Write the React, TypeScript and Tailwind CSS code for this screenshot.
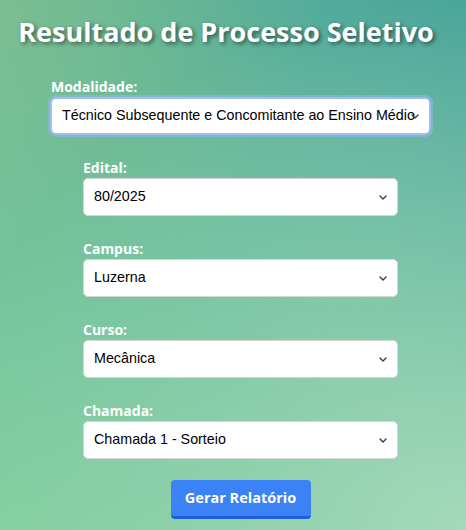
import React from 'react';

const campos = [
  { label: 'Edital:', value: '80/2025' },
  { label: 'Campus:', value: 'Luzerna' },
  { label: 'Curso:', value: 'Mecânica' },
  { label: 'Chamada:', value: 'Chamada 1 - Sorteio' },
];

const Chevron = ({ className }: { className: string }) => (
  <svg
    className={className}
    width="8"
    height="5"
    viewBox="0 0 8 5"
    fill="none"
    stroke="#3a3a3a"
    strokeWidth="1.4"
    strokeLinecap="round"
    strokeLinejoin="round"
  >
    <path d="M1 1l3 3 3-3" />
  </svg>
);

const App = () => {
  return (
    <div className="min-h-screen w-full pt-[13px] font-['Open_Sans',sans-serif] bg-[radial-gradient(circle_at_100%_100%,rgba(205,240,205,0.6)_0%,rgba(205,240,205,0)_75%),radial-gradient(circle_at_0%_0%,rgba(150,195,130,0.45)_0%,rgba(150,195,130,0)_45%),linear-gradient(to_bottom_left,#4aa59a,#80cd9c)]">
      {/* Título */}
      <h1 className="pr-[14px] text-center text-[27px] font-bold leading-[38px] text-white [text-shadow:2px_2px_4px_rgba(0,0,0,0.5)]">
        Resultado de Processo Seletivo
      </h1>

      <div className="mt-[26px] flex flex-col items-center gap-[23px] pl-[15px]">
        {/* Modalidade */}
        <div className="flex w-[381px] flex-col">
          <label className="block pl-[1px] text-[14px] font-bold leading-[19px] text-white">
            Modalidade:
          </label>
          <div className="relative mt-[1px]">
            <select
              defaultValue="tec"
              className="h-[38px] w-full appearance-none rounded-[6px] border-2 border-[#9cc0ee] bg-white pl-[10px] pr-[10px] font-['Liberation_Sans',Arial,sans-serif] text-[14.3px] text-black outline-none ring-2 ring-[#8fb6e6]/60"
            >
              <option value="tec">Técnico Subsequente e Concomitante ao Ensino Médio</option>
            </select>
            <Chevron className="pointer-events-none absolute right-[12px] top-[17px]" />
          </div>
        </div>

        {campos.map((c) => (
          <div key={c.label} className="flex w-[315px] flex-col">
            <label className="block text-[14px] font-bold leading-[19px] text-white">
              {c.label}
            </label>
            <div className="relative mt-[1px]">
              <select
                defaultValue={c.value}
                className="h-[38px] w-full appearance-none rounded-[5px] border border-[#d6d6d6] bg-white pl-[10px] pr-[24px] font-['Liberation_Sans',Arial,sans-serif] text-[14.3px] text-black outline-none"
              >
                <option value={c.value}>{c.value}</option>
              </select>
              <Chevron className="pointer-events-none absolute right-[11px] top-[17px]" />
            </div>
          </div>
        ))}

        <button className="-mt-[2px] h-[39px] w-[140px] rounded-[4px] border-b-[3px] border-[#1d5fd9] bg-[#3b82f6] text-[14.5px] font-bold text-white">
          Gerar Relatório
        </button>
      </div>
    </div>
  );
};

export default App;
